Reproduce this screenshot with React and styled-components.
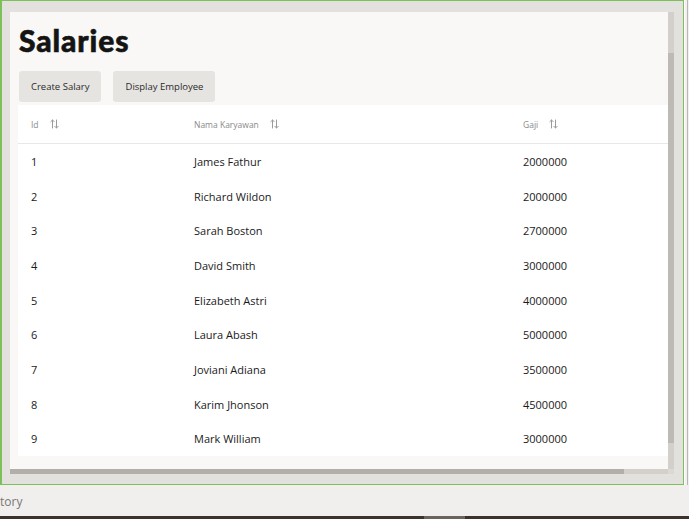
import React from "react";
import styled, { createGlobalStyle } from "styled-components";

const Global = createGlobalStyle`
  html, body { margin: 0; padding: 0; }
  body {
    width: 689px; height: 519px; overflow: hidden;
    background: #f0efed;
    font-family: Lato, "Open Sans", sans-serif;
  }
`;

const Page = styled.div`
  width: 689px; height: 519px;
  display: flex; flex-direction: column;
`;

const FrameRow = styled.div`
  display: flex; height: 485px;
`;

const Frame = styled.div`
  border: 1px solid #7cc05a; border-left-width: 2px;
  background: #e3e1dd;
  padding: 11px 0 0 8px;
  box-sizing: border-box;
  width: 685px; height: 485px;
`;

const Scroller = styled.div`
  display: grid;
  grid-template-columns: 658px 6px;
  grid-template-rows: 457px 5px;
`;

const Viewport = styled.div`
  background: #f9f8f6;
  overflow: hidden;
  padding: 0 0 0 8px;
`;

const VTrack = styled.div`
  background: #d3d0cc;
  display: flex; flex-direction: column;
  padding-top: 41px;
`;
const VThumb = styled.div`
  height: 390px; background: #bdbab5;
`;
const HTrack = styled.div`
  background: #d3d0cc; display: flex;
`;
const HThumb = styled.div`
  width: 614px; background: #b2afaa;
`;
const Corner = styled.div`
  background: #dcd9d5;
`;

const Title = styled.h1`
  margin: 0; padding: 11px 0 0 1px;
  font-family: Lato, sans-serif; font-weight: 900;
  font-size: 30px; line-height: 34px; color: #141414;
  letter-spacing: 0.9px;
  -webkit-text-stroke: 0.6px #141414;
`;

const Actions = styled.div`
  display: flex; gap: 12px; margin-top: 14px; padding-left: 1px;
`;

const Button = styled.button`
  height: 31px; padding: 0 12px;
  border: none; border-radius: 3px;
  background: #e6e4e1; color: #2a2a2a;
  font-family: "Open Sans", sans-serif; font-size: 9.5px;
  cursor: pointer;
`;

const Table = styled.table`
  margin-top: 3px;
  width: 700px; border-collapse: collapse; table-layout: fixed;
  background: #fff;
`;

const Th = styled.th`
  height: 38px; padding: 0 0 0 13px; text-align: left;
  font-family: "Open Sans", sans-serif; font-weight: 400;
  font-size: 8.5px; color: #8a8a8a;
  border-bottom: 1px solid #e8e8e8;
`;

const ThInner = styled.span`
  display: inline-flex; align-items: center; gap: 11px;
`;

const Td = styled.td`
  height: 34.7px; padding: 0 0 0 13px;
  font-family: "Open Sans", sans-serif; font-size: 11px; color: #1a1a1a;
  white-space: nowrap;
`;

const Tr = styled.tr``;

const BottomBar = styled.div`
  height: 31px; display: flex; align-items: center;
  font-family: "Open Sans", sans-serif; font-size: 12px; color: #777;
  padding-top: 1px; box-sizing: border-box;
`;

const DarkStrip = styled.div`
  height: 3px; background: #3a332c; display: flex;
`;
const StripSeg = styled.div`
  margin-left: 424px; width: 41px; background: #6a645e;
`;

const RightEdge = styled.div`
  width: 4px; background: #f2f1ef; border-left: 1px solid #fff;
  display: flex; justify-content: flex-end;
`;
const RightLine = styled.div`
  width: 1px; margin-right: 1px; background: #b8b6b2;
`;

const SortIcon = () => (
  <svg width="9" height="10" viewBox="0 0 9 10" fill="none" stroke="#9a9a9a" strokeWidth="1" strokeLinecap="round" strokeLinejoin="round">
    <path d="M2.5 9V1M0.8 2.7L2.5 1L4.2 2.7" />
    <path d="M6.5 1V9M4.8 7.3L6.5 9L8.2 7.3" />
  </svg>
);

const rows = [
  [1, "James Fathur", 2000000],
  [2, "Richard Wildon", 2000000],
  [3, "Sarah Boston", 2700000],
  [4, "David Smith", 3000000],
  [5, "Elizabeth Astri", 4000000],
  [6, "Laura Abash", 5000000],
  [7, "Joviani Adiana", 3500000],
  [8, "Karim Jhonson", 4500000],
  [9, "Mark William", 3000000],
];

export default function App() {
  return (
    <Page>
      <Global />
      <FrameRow>
        <Frame>
          <Scroller>
            <Viewport>
              <Title>Salaries</Title>
              <Actions>
                <Button>Create Salary</Button>
                <Button>Display Employee</Button>
              </Actions>
              <Table>
                <colgroup>
                  <col style={{ width: 163 }} />
                  <col style={{ width: 329 }} />
                  <col />
                </colgroup>
                <thead>
                  <tr>
                    <Th><ThInner>Id <SortIcon /></ThInner></Th>
                    <Th><ThInner>Nama Karyawan <SortIcon /></ThInner></Th>
                    <Th><ThInner>Gaji <SortIcon /></ThInner></Th>
                  </tr>
                </thead>
                <tbody>
                  {rows.map((r) => (
                    <Tr key={r[0]}>
                      <Td>{r[0]}</Td>
                      <Td>{r[1]}</Td>
                      <Td>{r[2]}</Td>
                    </Tr>
                  ))}
                </tbody>
              </Table>
            </Viewport>
            <VTrack><VThumb /></VTrack>
            <HTrack><HThumb /></HTrack>
            <Corner />
          </Scroller>
        </Frame>
        <RightEdge><RightLine /></RightEdge>
      </FrameRow>
      <BottomBar>tory</BottomBar>
      <DarkStrip><StripSeg /></DarkStrip>
    </Page>
  );
}
